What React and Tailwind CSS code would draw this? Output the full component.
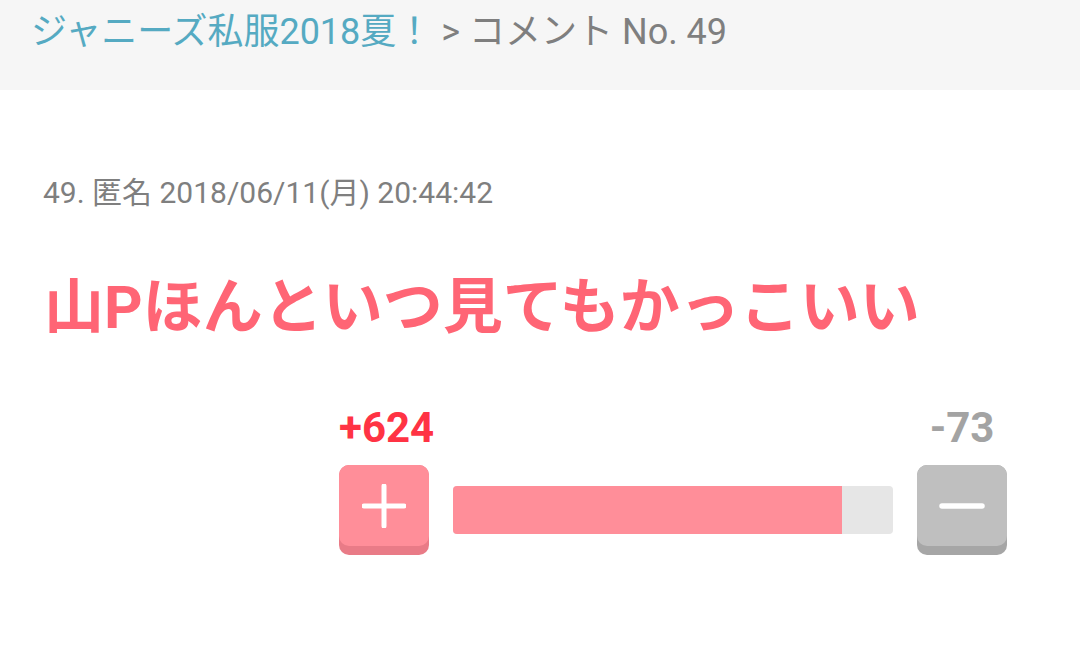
export default function App() {
  const font = { fontFamily: 'Roboto, "Noto Sans CJK JP", sans-serif' };
  return (
    <div className="w-[1080px] h-[652px] bg-white overflow-hidden" style={font}>
      <div className="h-[90px] bg-[#f6f6f6] pl-[31px] pt-[9px] text-[36px] leading-[46px] text-[#7f7f7f] whitespace-nowrap">
        <span className="text-[#55aac2]">ジャニーズ私服2018夏！</span>
        <span> &gt; コメント No. 49</span>
      </div>
      <div className="pl-[43px] pt-[85px] text-[30px] leading-[36px] text-[#7f7f7f] whitespace-nowrap">
        49. 匿名 2018/06/11(月) 20:44:42
      </div>
      <div className="pl-[44px] pt-[62px] text-[60px] leading-[70px] font-bold text-[#ff6575] whitespace-nowrap">
        山Pほんといつ見てもかっこいい
      </div>
      <div className="flex justify-end pr-[73px] pt-[60px]">
        <div className="w-[668px] flex flex-col">
          <div className="flex justify-between text-[42px] leading-[50px] font-bold">
            <span className="w-[90px] text-center text-[#ff3344]">+624</span>
            <span className="w-[90px] text-center text-[#a3a3a3]">-73</span>
          </div>
          <div className="mt-[12px] flex items-start gap-[24px]">
            <div className="w-[90px] h-[90px] rounded-[10px] bg-[#e97b87] shrink-0">
              <div className="h-[81px] rounded-[10px] bg-[#ff8e99] flex items-center justify-center">
                <svg width="44" height="44" viewBox="0 0 44 44">
                  <path d="M22 2 V42 M2 22 H42" stroke="white" strokeWidth="5" strokeLinecap="round" />
                </svg>
              </div>
            </div>
            <div className="mt-[21px] flex-1 h-[48px] rounded-[4px] bg-[#e6e6e6] overflow-hidden">
              <div className="h-full bg-[#ff8e99]" style={{ width: '88.5%' }} />
            </div>
            <div className="w-[90px] h-[90px] rounded-[10px] bg-[#a6a6a6] shrink-0">
              <div className="h-[81px] rounded-[10px] bg-[#bfbfbf] flex items-center justify-center">
                <svg width="46" height="10" viewBox="0 0 46 10">
                  <path d="M3 5 H43" stroke="white" strokeWidth="5.5" strokeLinecap="round" />
                </svg>
              </div>
            </div>
          </div>
        </div>
      </div>
    </div>
  );
}
